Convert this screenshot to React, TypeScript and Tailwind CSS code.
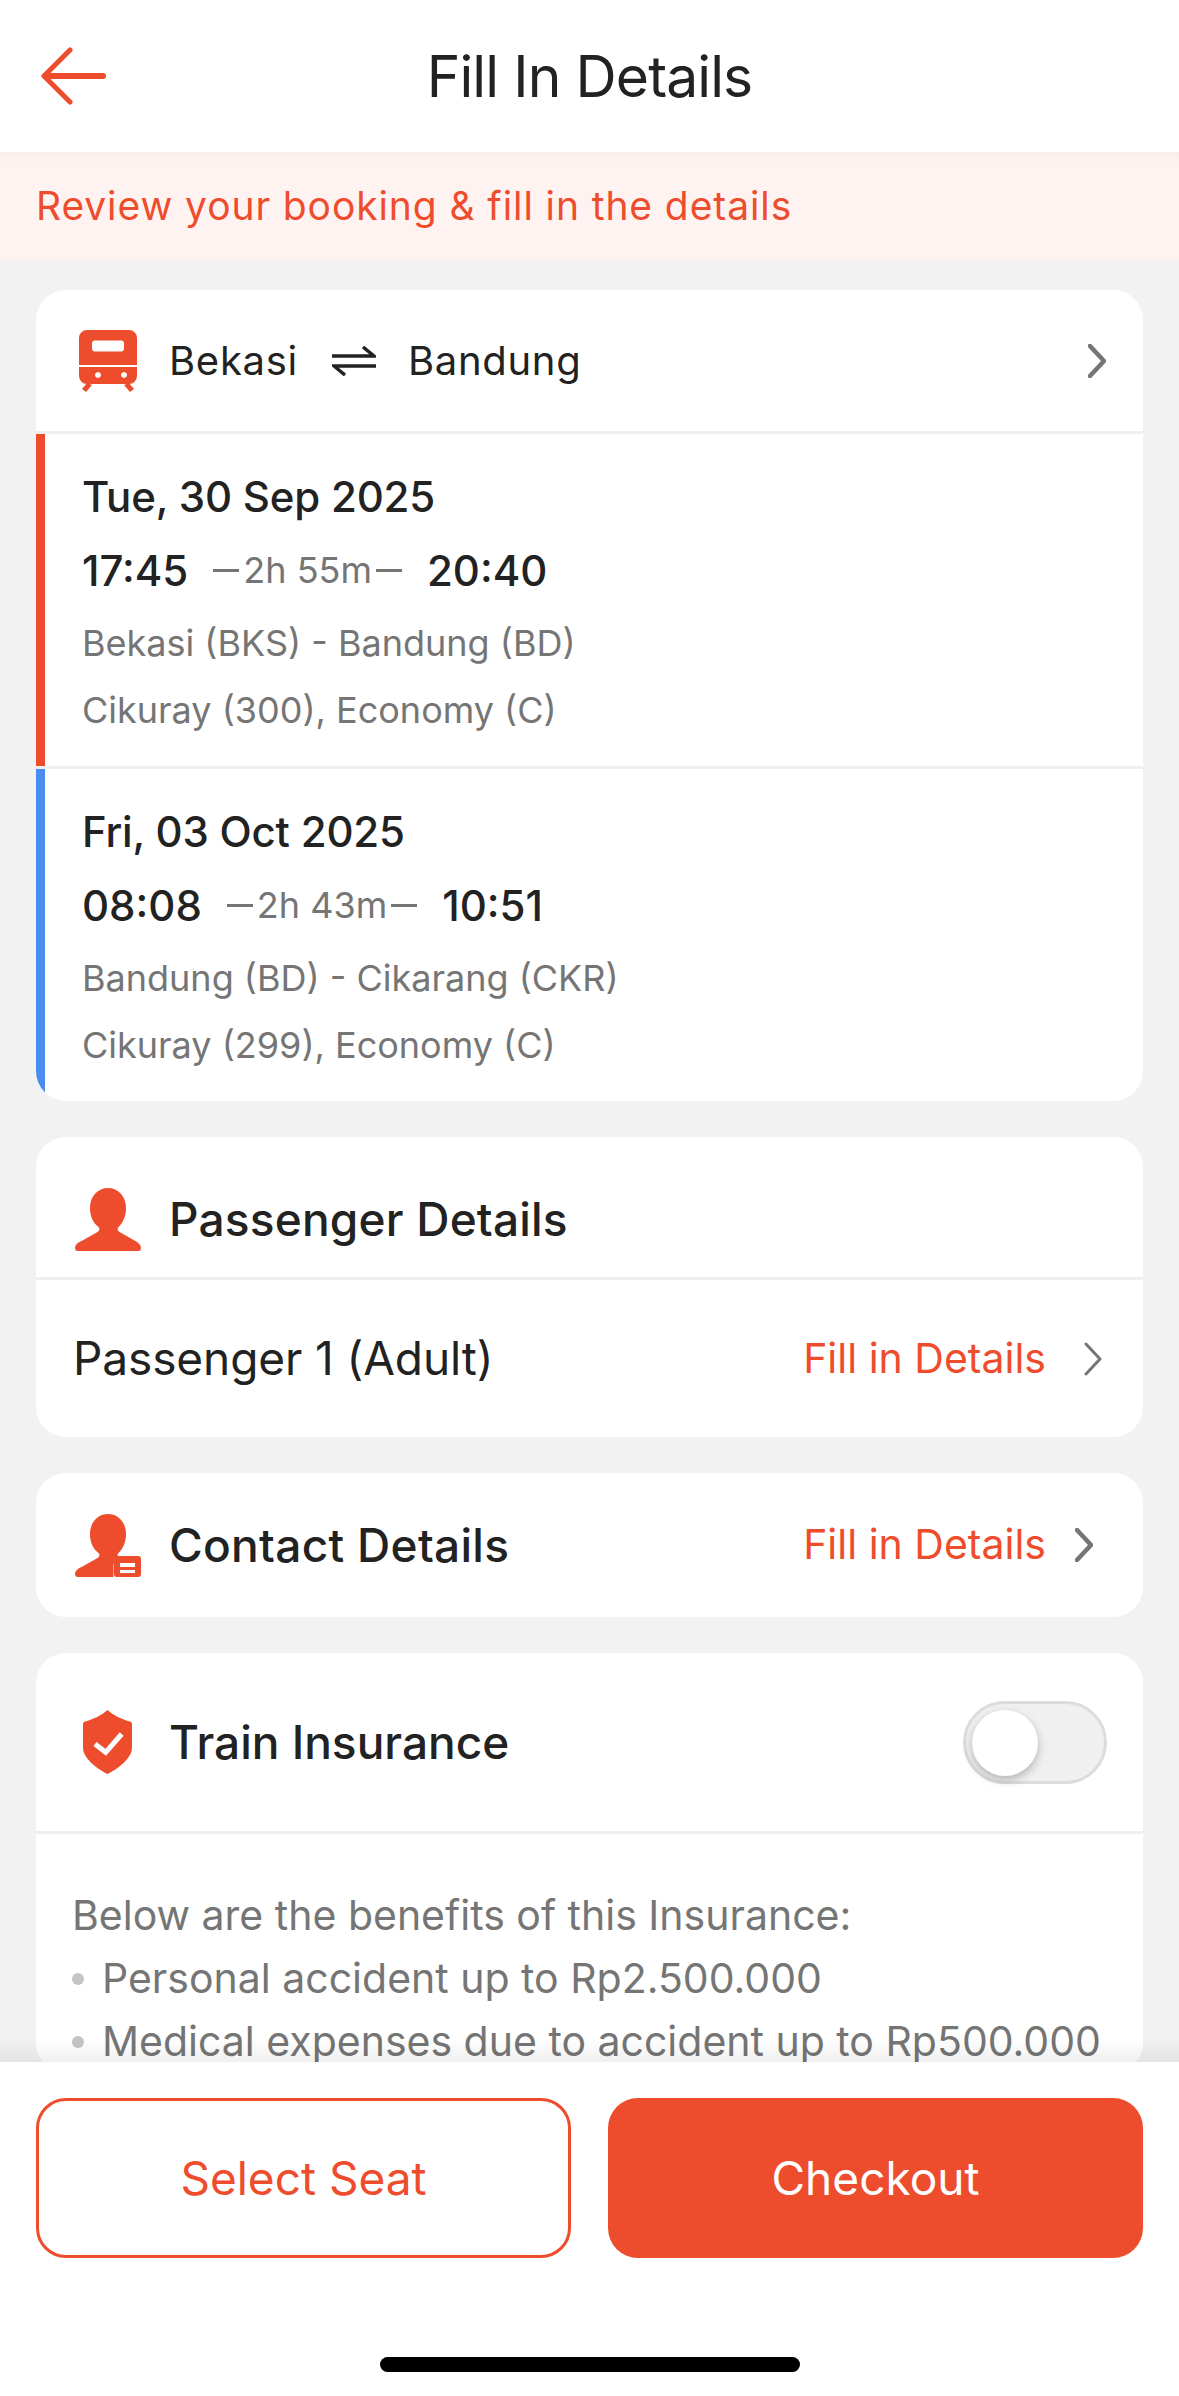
import type { ReactNode } from "react";

function BackArrow() {
  return (
    <svg width="66" height="58" viewBox="0 0 66 58" fill="none" stroke="#ee4d2d" strokeLinecap="round" strokeLinejoin="round">
      <path d="M4 29H62" strokeWidth="6" />
      <path d="M29 3 3 29 29 55" strokeWidth="5" />
    </svg>
  );
}

function TrainIcon() {
  return (
    <svg width="58" height="62" viewBox="0 0 58 62" fill="#ee4d2d">
      <path fillRule="evenodd" d="M8 0h42a8 8 0 0 1 8 8v27H0V8a8 8 0 0 1 8-8Zm8 10.500a3 3 0 0 0-3 3v5a3 3 0 0 0 3 3h26a3 3 0 0 0 3-3v-5a3 3 0 0 0-3-3H16Z" />
      <path fillRule="evenodd" d="M0 37h58v9a8 8 0 0 1-8 8H8a8 8 0 0 1-8-8v-9Zm16 8a3 3 0 1 0 0-.01Zm26 0a3 3 0 1 0 0-.01Z" />
      <path d="M8 53l5 2-6 7-4-3 5-6ZM50 53l-5 2 6 7 4-3-5-6Z" />
    </svg>
  );
}

function SwapIcon() {
  return (
    <svg width="44" height="30" viewBox="0 0 44 30" fill="none" stroke="#222222" strokeWidth="3.500">
      <path d="M0 10h42L31 1" />
      <path d="M44 20H2l11 9" />
    </svg>
  );
}

function Chevron({ bold = false }: { bold?: boolean }) {
  return (
    <svg width="18" height="34" viewBox="0 0 18 34" fill="none" stroke="#757575" strokeWidth={bold ? 4.5 : 3} strokeLinecap="round" strokeLinejoin="round">
      <path d="M2 2l14 15L2 32" />
    </svg>
  );
}

function PersonIcon() {
  return (
    <svg width="66" height="63" viewBox="0 0 66 63" fill="#ee4d2d">
      <path d="M33 0c10 0 18 8 18 20 0 8-3 15-7.500 19-1.500 1.500-1 4 1 5l15 8.500C63 54 66 57 66 60c0 2-1 3-3 3H3c-2 0-3-1-3-3 0-3 3-6 7.500-7.500l15-8.500c2-1 2.500-3.500 1-5C18 35 15 28 15 20 15 8 23 0 33 0Z" />
    </svg>
  );
}

function ContactIcon() {
  return (
    <svg width="66" height="63" viewBox="0 0 66 63" fill="#ee4d2d">
      <path d="M33 0c10 0 18 8 18 20 0 8-3 15-7.500 19-1.500 1.500-1 4 1 5l1 .5c-4 .5-7 3-7 7V63H3c-2 0-3-1-3-3 0-3 3-6 7.500-7.500l15-8.500c2-1 2.500-3.500 1-5C18 35 15 28 15 20 15 8 23 0 33 0Z" />
      <path fillRule="evenodd" d="M42 42h21a3 3 0 0 1 3 3v15a3 3 0 0 1-3 3H42a3 3 0 0 1-3-3V45a3 3 0 0 1 3-3Zm3 7v4h15v-4H45Zm0 7v3h15v-3H45Z" />
    </svg>
  );
}

function ShieldIcon() {
  return (
    <svg width="49" height="64" viewBox="0 0 49 64" fill="none">
      <path d="M24.500 0C30 5 39 9.500 47 11.500c1.200.3 2 1.300 2 2.500v24c0 10-14 21-24.500 26C14 59 0 48 0 38V14c0-1.200.8-2.200 2-2.500C10 9.500 19 5 24.500 0Z" fill="#ee4d2d" />
      <path d="M12 34l10.700 8.300L38.700 24" stroke="#ffffff" strokeWidth="5" />
    </svg>
  );
}

function Card({ children }: { children: ReactNode }) {
  return <div className="mx-9 shrink-0 rounded-[30px] bg-white overflow-hidden">{children}</div>;
}

function Trip({
  date,
  from,
  duration,
  to,
  route,
  train,
  bar,
  height,
}: {
  date: string;
  from: string;
  duration: string;
  to: string;
  route: string;
  train: string;
  bar: string;
  height: string;
}) {
  return (
    <div className={`flex ${height}`}>
      <div className={`w-[9px] h-full ${bar}`} />
      <div className="pl-[37px] pt-[33px]">
        <div className="text-[42px] leading-[60px] font-medium text-[#222222] tracking-[-0.2px]">{date}</div>
        <div className="mt-[13px] flex items-center h-[60px] text-[#222222]">
          <span className="text-[42px] font-medium">{from}</span>
          <span className="ml-[25px] w-[26px] h-[3px] bg-[#757575]" />
          <span className="mx-1 text-[36px] text-[#757575]">{duration}</span>
          <span className="w-[26px] h-[3px] bg-[#757575]" />
          <span className="ml-[25px] text-[42px] font-medium">{to}</span>
        </div>
        <div className="mt-[13px] text-[36px] leading-[60px] text-[#757575]">{route}</div>
        <div className="mt-[7px] text-[36px] leading-[60px] text-[#757575]">{train}</div>
      </div>
    </div>
  );
}

export default function App() {
  return (
    <div className="w-[1179px] h-[2396px] flex flex-col overflow-hidden bg-[#f2f2f2] font-['Inter','Liberation_Sans',sans-serif]">
      {/* Header */}
      <div className="relative z-10 h-[152px] shrink-0 bg-white flex items-center pl-[41px]">
        <BackArrow />
        <div className="absolute inset-0 pt-[2px] flex items-center justify-center text-[57px] text-[#222222] tracking-[-0.9px]">
          Fill In Details
        </div>
      </div>

      <div className="h-[108px] shrink-0 flex items-center pl-9 text-[39px] tracking-[0.9px] text-[#ee4d2d] bg-gradient-to-b from-[#f8eeec] to-[#fff3f1] to-[12%]">
        Review your booking &amp; fill in the details
      </div>

      {/* Scroll area */}
      <div className="relative flex-1 min-h-0 overflow-hidden pt-[30px] flex flex-col gap-[36px]">
        <Card>
          <div className="flex items-center h-[144px] border-b-[3px] border-[#efefef] pl-[43px] pr-[37px]">
            <TrainIcon />
            <span className="ml-[32px] text-[40px] tracking-[0.7px] text-[#222222]">Bekasi</span>
            <span className="ml-[34px]"><SwapIcon /></span>
            <span className="ml-[32px] text-[40px] tracking-[0.7px] text-[#222222]">Bandung</span>
            <span className="ml-auto"><Chevron bold /></span>
          </div>
          <Trip
            date="Tue, 30 Sep 2025"
            from="17:45"
            duration="2h 55m"
            to="20:40"
            route="Bekasi (BKS) - Bandung (BD)"
            train="Cikuray (300), Economy (C)"
            bar="bg-[#ee4d2d]"
            height="h-[332px]"
          />
          <div className="h-[3px] bg-[#efefef]" />
          <Trip
            date="Fri, 03 Oct 2025"
            from="08:08"
            duration="2h 43m"
            to="10:51"
            route="Bandung (BD) - Cikarang (CKR)"
            train="Cikuray (299), Economy (C)"
            bar="bg-[#4a8cf0]"
            height="h-[332px]"
          />
        </Card>

        <Card>
          <div className="flex items-center h-[143px] border-b-[3px] border-[#efefef] pl-[39px] pt-[24px]">
            <PersonIcon />
            <span className="ml-[28px] text-[46px] font-medium tracking-[0.2px] text-[#222222]">Passenger Details</span>
          </div>
          <div className="flex items-center h-[157px] pl-[37px] pr-[41px]">
            <span className="text-[46px] tracking-[-0.1px] text-[#222222]">Passenger 1 (Adult)</span>
            <span className="ml-auto text-[41px] text-[#ee4d2d]">Fill in Details</span>
            <span className="ml-[38px]"><Chevron /></span>
          </div>
        </Card>

        <Card>
          <div className="flex items-center h-[144px] pl-[39px] pr-[50px]">
            <ContactIcon />
            <span className="ml-[28px] text-[46px] font-medium tracking-[0.3px] text-[#222222]">Contact Details</span>
            <span className="ml-auto text-[41px] text-[#ee4d2d]">Fill in Details</span>
            <span className="ml-[29px]"><Chevron bold /></span>
          </div>
        </Card>

        <Card>
          <div className="flex items-center h-[181px] border-b-[3px] border-[#efefef] pl-[47px] pr-[36px]">
            <ShieldIcon />
            <span className="ml-[37px] text-[46px] font-medium text-[#222222]">Train Insurance</span>
            <div className="relative ml-auto w-[144px] h-[83px] rounded-full bg-[#f0f0f0] border-[3px] border-[#dcdcdc]">
              <div className="absolute left-[6px] top-[6px] w-[66px] h-[66px] rounded-full bg-white shadow-[0_4px_10px_rgba(0,0,0,0.25)]" />
            </div>
          </div>
          <div className="pl-9 pr-9 pt-[50px] text-[41px] leading-[63px] text-[#757575]">
            <div>Below are the benefits of this Insurance:</div>
            <div className="flex items-center">
              <span className="w-3 h-3 rounded-full bg-[#c4c4c4]" />
              <span className="ml-[18px]">Personal accident up to Rp2.500.000</span>
            </div>
            <div className="flex items-center">
              <span className="w-3 h-3 rounded-full bg-[#c4c4c4]" />
              <span className="ml-[18px]">Medical expenses due to accident up to Rp500.000</span>
            </div>
          </div>
        </Card>
        <div className="absolute left-0 right-0 bottom-0 h-6 bg-gradient-to-b from-transparent to-black/[0.06]" />
      </div>

      {/* Footer */}
      <div className="relative h-[334px] shrink-0 bg-white px-9 pt-9">
        <div className="grid grid-cols-2 gap-[37px]">
          <button type="button" className="h-[160px] rounded-[30px] border-[3px] border-[#ee4d2d] bg-white text-[46px] text-[#ee4d2d]">
            Select Seat
          </button>
          <button type="button" className="h-[160px] rounded-[30px] bg-[#ee4d2d] text-[46px] text-white">
            Checkout
          </button>
        </div>
        <div className="absolute left-[380px] top-[295px] w-[420px] h-[15px] rounded-full bg-black" />
      </div>
    </div>
  );
}
